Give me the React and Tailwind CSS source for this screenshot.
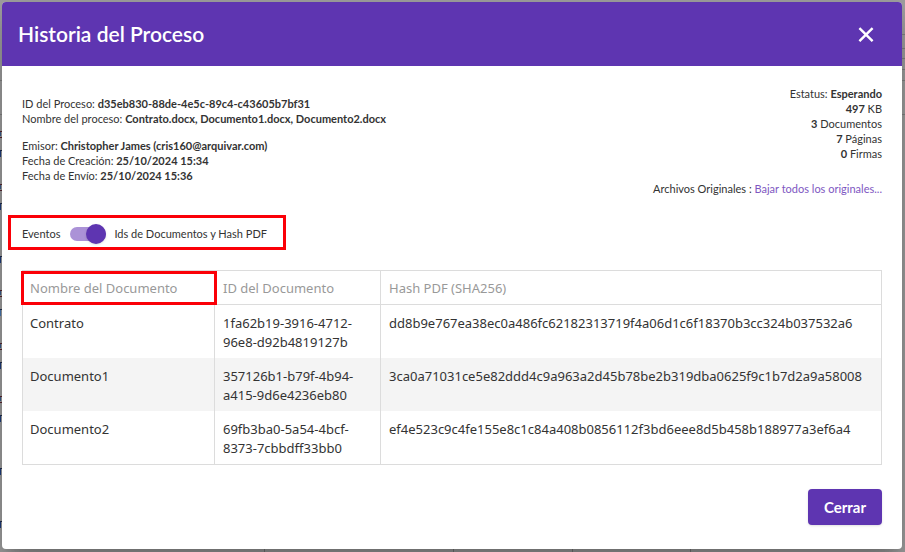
import React from "react";

const documents = [
  ["Contrato", "1fa62b19-3916-4712-96e8-d92b4819127b", "dd8b9e767ea38ec0a486fc62182313719f4a06d1c6f18370b3cc324b037532a6"],
  ["Documento1", "357126b1-b79f-4b94-a415-9d6e4236eb80", "3ca0a71031ce5e82ddd4c9a963a2d45b78be2b319dba0625f9c1b7d2a9a58008"],
  ["Documento2", "69fb3ba0-5a54-4bcf-8373-7cbbdff33bb0", "ef4e523c9c4fe155e8c1c84a408b0856112f3bd6eee8d5b458b188977a3ef6a4"],
];

const iconRows = [131, 184, 290, 343, 396];
const linkRows = [150, 203, 256, 309, 362, 415, 468, 521];
const ruleRows = [34, 48, 58, 69, 80, 114];
const columnRules = [264, 453, 572, 690];

// The dimmed page behind the dialog, seen only at its edges.
function Backdrop() {
  return (
    <svg aria-hidden="true" className="absolute inset-0 size-full" shapeRendering="crispEdges">
      {ruleRows.map((y) => (
        <rect key={y} x="50%" y={y} width="50%" height="1" fill="#858585" />
      ))}
      <rect y="80" width="2" height="1" fill="#858585" />
      <rect y="114" width="2" height="1" fill="#858585" />
      {iconRows.map((y) => (
        <g key={y}>
          <rect y={y} width="2" height="1" fill="#5b2530" />
          <rect y={y + 1} width="1" height="4" fill="#3d5f8f" />
          <rect y={y + 6} width="2" height="1" fill="#5b2530" />
        </g>
      ))}
      {linkRows.map((y) => (
        <g key={y}>
          <rect y={y} width="2" height="1" fill="#22304f" />
          <rect y={y + 1} width="1" height="6" fill={y === 309 ? "#4a7ab5" : "#1f3f80"} />
        </g>
      ))}
      {columnRules.map((x) => (
        <rect key={x} x={x} y="50%" width="1" height="50%" fill="#7a7a7a" />
      ))}
    </svg>
  );
}

function Header() {
  return (
    <header className="flex h-16 items-center justify-between bg-[#5e35b1] pl-4 pr-7 text-white">
      <h1 className="text-[21px] leading-6 font-semibold">Historia del Proceso</h1>
      <button type="button" aria-label="Cerrar ventana" className="flex size-4 items-center justify-center">
        <svg viewBox="0 0 16 16" className="size-4" fill="none" stroke="currentColor" strokeWidth="2.4">
          <path d="M1.4 2.2 14.6 15.2M14.6 2.2 1.4 15.2" />
        </svg>
      </button>
    </header>
  );
}

function Summary() {
  return (
    <section className="flex justify-between text-[11px] leading-[15px]">
      <div className="pt-[10px]">
        <p>ID del Proceso: <b>d35eb830-88de-4e5c-89c4-c43605b7bf31</b></p>
        <p>Nombre del proceso: <b>Contrato.docx, Documento1.docx, Documento2.docx</b></p>
        <p className="mt-3">Emisor: <b>Christopher James (cris160@arquivar.com)</b></p>
        <p>Fecha de Creación: <b>25/10/2024 15:34</b></p>
        <p>Fecha de Envío: <b>25/10/2024 15:36</b></p>
      </div>
      <div className="text-right">
        <p>Estatus: <b>Esperando</b></p>
        <p><b>497</b> KB</p>
        <p><b>3</b> Documentos</p>
        <p><b>7</b> Páginas</p>
        <p><b>0</b> Firmas</p>
        <p className="mt-5">
          Archivos Originales : <a href="#originales" className="text-[#7e57c2]">Bajar todos los originales...</a>
        </p>
      </div>
    </section>
  );
}

function ViewSwitch() {
  return (
    <div className="-ml-[14px] mt-[19px] flex h-[35px] w-fit items-center border-[3px] border-[#fb0007] pl-[11px] pr-4 pt-[3px] text-[11px]">
      <label htmlFor="view">Eventos</label>
      <span className="relative ml-[10px] flex h-5 w-9 items-center">
        <input
          id="view"
          type="checkbox"
          role="switch"
          defaultChecked
          className="peer h-[14px] w-9 appearance-none rounded-full bg-[#ab92d7]"
        />
        <span className="pointer-events-none absolute left-0 size-5 rounded-full bg-white shadow-sm peer-checked:left-4 peer-checked:bg-[#5e35b1]" />
      </span>
      <label htmlFor="view" className="ml-2">Ids de Documentos y Hash PDF</label>
    </div>
  );
}

function DocumentTable() {
  return (
    <table className="mt-5 w-full table-fixed border-separate border-spacing-0 border border-[#dcdcdc] text-left font-['Noto_Sans',sans-serif] text-[13px] leading-[19px] text-[#333]">
      <colgroup>
        <col className="w-[192px]" />
        <col className="w-[166px]" />
        <col />
      </colgroup>
      <thead className="text-[#999]">
        <tr className="h-[34px]">
          <th className="relative border-b border-r border-[#dcdcdc] px-[7px] pt-0.5 font-normal">
            Nombre del Documento
            <span className="pointer-events-none absolute -left-0.5 -right-[3px] -bottom-px top-0 border-[3px] border-[#fb0007]" />
          </th>
          <th className="border-b border-r border-[#dcdcdc] px-2 pt-0.5 font-normal">ID del Documento</th>
          <th className="border-b border-[#dcdcdc] px-2 pt-0.5 font-normal">Hash PDF (SHA256)</th>
        </tr>
      </thead>
      <tbody>
        {documents.map(([name, id, hash]) => (
          <tr key={id} className="align-top even:bg-[#f4f4f4]">
            <td className="border-r border-[#dcdcdc] px-[7px] pb-[6px] pt-[9px]">{name}</td>
            <td className="border-r border-[#dcdcdc] px-2 pb-[6px] pt-[9px]">{id}</td>
            <td className="px-2 pb-[6px] pt-[9px]">{hash}</td>
          </tr>
        ))}
      </tbody>
    </table>
  );
}

export default function App() {
  return (
    <div className="relative min-h-screen overflow-hidden bg-[#a3a3a3] pb-[3px] pl-[2px] pr-[3px] pt-[2px] font-[Lato,sans-serif] text-[#333]">
      <Backdrop />
      <main className="relative overflow-hidden rounded bg-white shadow-[0_11px_15px_-7px_rgba(0,0,0,0.2),0_24px_38px_3px_rgba(0,0,0,0.14),0_9px_46px_8px_rgba(0,0,0,0.12)]">
        <Header />
        <div className="px-5 pb-6 pt-5">
          <Summary />
          <ViewSwitch />
          <DocumentTable />
          <div className="mt-6 flex justify-end">
            <button type="button" className="h-9 rounded bg-[#5e35b1] px-4 text-[15px] font-bold text-white shadow">Cerrar</button>
          </div>
        </div>
      </main>
    </div>
  );
}
